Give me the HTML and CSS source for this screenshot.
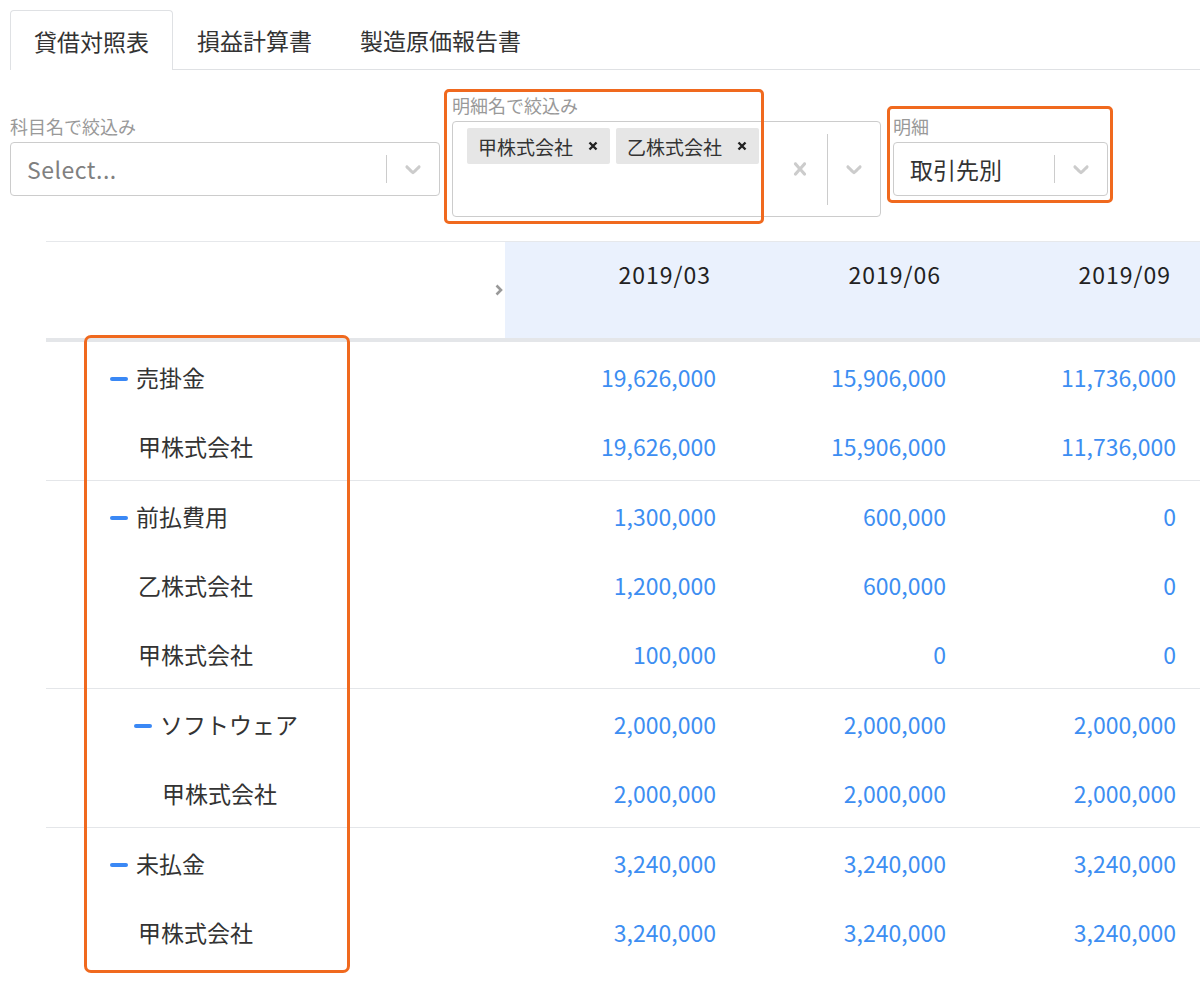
FILE: index.html
```html
<!DOCTYPE html>
<html lang="ja">
<head>
    <meta charset="UTF-8">
    <meta name="viewport" content="width=device-width, initial-scale=1.0">
    <title>貸借対照表</title>
    <link rel="stylesheet" href="styles.css">
</head>
<body>
    <div class="page">
        <nav class="tabs">
            <div class="tab active">貸借対照表</div>
            <div class="tab">損益計算書</div>
            <div class="tab">製造原価報告書</div>
        </nav>

        <div class="filters">
            <div class="filter filter-account">
                <label>科目名で絞込み</label>
                <div class="select">
                    <div class="select-value placeholder">Select...</div>
                    <span class="separator"></span>
                    <div class="indicator">
                        <svg width="26" height="26" viewBox="0 0 20 20"><path d="M4.516 7.548c0.436-0.446 1.043-0.481 1.576 0l3.908 3.747 3.908-3.747c0.533-0.481 1.141-0.446 1.574 0 0.436 0.445 0.408 1.197 0 1.615-0.406 0.418-4.695 4.502-4.695 4.502-0.217 0.223-0.502 0.335-0.787 0.335s-0.57-0.112-0.789-0.335c0 0-4.287-4.084-4.695-4.502s-0.436-1.170 0-1.615z"/></svg>
                    </div>
                </div>
            </div>

            <div class="filter filter-detail">
                <label>明細名で絞込み</label>
                <div class="select multi">
                    <div class="select-value tags">
                        <span class="tag">甲株式会社<span class="tag-remove"><svg width="10" height="10" viewBox="0 0 10 10"><path d="M1.5 1.5L8.5 8.5M8.5 1.5L1.5 8.5"/></svg></span></span>
                        <span class="tag">乙株式会社<span class="tag-remove"><svg width="10" height="10" viewBox="0 0 10 10"><path d="M1.5 1.5L8.5 8.5M8.5 1.5L1.5 8.5"/></svg></span></span>
                    </div>
                    <div class="indicator clear">
                        <svg width="26" height="26" viewBox="0 0 20 20"><path d="M14.348 14.849c-0.469 0.469-1.229 0.469-1.697 0l-2.651-3.030-2.651 3.029c-0.469 0.469-1.229 0.469-1.697 0-0.469-0.469-0.469-1.229 0-1.697l2.758-3.150-2.759-3.152c-0.469-0.469-0.469-1.228 0-1.697s1.228-0.469 1.697 0l2.652 3.031 2.651-3.031c0.469-0.469 1.228-0.469 1.697 0s0.469 1.229 0 1.697l-2.758 3.152 2.758 3.150c0.469 0.469 0.469 1.229 0 1.698z"/></svg>
                    </div>
                    <span class="separator tall"></span>
                    <div class="indicator">
                        <svg width="26" height="26" viewBox="0 0 20 20"><path d="M4.516 7.548c0.436-0.446 1.043-0.481 1.576 0l3.908 3.747 3.908-3.747c0.533-0.481 1.141-0.446 1.574 0 0.436 0.445 0.408 1.197 0 1.615-0.406 0.418-4.695 4.502-4.695 4.502-0.217 0.223-0.502 0.335-0.787 0.335s-0.57-0.112-0.789-0.335c0 0-4.287-4.084-4.695-4.502s-0.436-1.170 0-1.615z"/></svg>
                    </div>
                </div>
                <div class="mark mark-detail"></div>
            </div>

            <div class="filter filter-mode">
                <label>明細</label>
                <div class="select">
                    <div class="select-value">取引先別</div>
                    <span class="separator"></span>
                    <div class="indicator">
                        <svg width="26" height="26" viewBox="0 0 20 20"><path d="M4.516 7.548c0.436-0.446 1.043-0.481 1.576 0l3.908 3.747 3.908-3.747c0.533-0.481 1.141-0.446 1.574 0 0.436 0.445 0.408 1.197 0 1.615-0.406 0.418-4.695 4.502-4.695 4.502-0.217 0.223-0.502 0.335-0.787 0.335s-0.57-0.112-0.789-0.335c0 0-4.287-4.084-4.695-4.502s-0.436-1.170 0-1.615z"/></svg>
                    </div>
                </div>
                <div class="mark mark-mode"></div>
            </div>
        </div>

        <div class="report-wrap">
            <table class="report">
                <colgroup>
                    <col class="col-name">
                    <col class="col-period">
                    <col class="col-period">
                    <col class="col-period">
                    <col>
                </colgroup>
                <thead>
                    <tr>
                        <th class="name-head">
                            <svg class="expand" width="8" height="12" viewBox="0 0 8 12"><path d="M1.5 1.5L6 6L1.5 10.5"/></svg>
                        </th>
                        <th>2019/03</th>
                        <th>2019/06</th>
                        <th>2019/09</th>
                        <th></th>
                    </tr>
                </thead>
                <tbody>
                    <tr class="group-start">
                        <td class="name level-1"><span class="collapse"></span>売掛金</td>
                        <td>19,626,000</td><td>15,906,000</td><td>11,736,000</td><td></td>
                    </tr>
                    <tr>
                        <td class="name level-1 child">甲株式会社</td>
                        <td>19,626,000</td><td>15,906,000</td><td>11,736,000</td><td></td>
                    </tr>
                    <tr class="group-start">
                        <td class="name level-1"><span class="collapse"></span>前払費用</td>
                        <td>1,300,000</td><td>600,000</td><td>0</td><td></td>
                    </tr>
                    <tr>
                        <td class="name level-1 child">乙株式会社</td>
                        <td>1,200,000</td><td>600,000</td><td>0</td><td></td>
                    </tr>
                    <tr>
                        <td class="name level-1 child">甲株式会社</td>
                        <td>100,000</td><td>0</td><td>0</td><td></td>
                    </tr>
                    <tr class="group-start">
                        <td class="name level-2"><span class="collapse"></span>ソフトウェア</td>
                        <td>2,000,000</td><td>2,000,000</td><td>2,000,000</td><td></td>
                    </tr>
                    <tr>
                        <td class="name level-2 child">甲株式会社</td>
                        <td>2,000,000</td><td>2,000,000</td><td>2,000,000</td><td></td>
                    </tr>
                    <tr class="group-start">
                        <td class="name level-1"><span class="collapse"></span>未払金</td>
                        <td>3,240,000</td><td>3,240,000</td><td>3,240,000</td><td></td>
                    </tr>
                    <tr>
                        <td class="name level-1 child">甲株式会社</td>
                        <td>3,240,000</td><td>3,240,000</td><td>3,240,000</td><td></td>
                    </tr>
                </tbody>
            </table>
            <div class="mark mark-names"></div>
        </div>
    </div>
</body>
</html>
```

FILE: styles.css
```css
/* General Styling */
body {
    margin: 0;
    padding: 0;
    background-color: #ffffff;
    color: #333333;
    font-family: "Noto Sans CJK JP", "Noto Sans", sans-serif;
    overflow: hidden;
}

.page {
    width: 1200px;
    padding-top: 10px;
}

/* Tabs */
.tabs {
    display: flex;
    margin-left: 10px;
    border-bottom: 1px solid #dfe1e4;
}

.tab {
    height: 58px;
    padding: 0 23px;
    display: flex;
    align-items: center;
    font-size: 23px;
    color: #333;
    border: 1px solid transparent;
    border-bottom: none;
}

.tab.active {
    border-color: #dfe1e4;
    border-radius: 4px 4px 0 0;
    background: #ffffff;
    margin-bottom: -1px;
    height: 59px;
}

/* Filters */
.filters {
    display: flex;
    align-items: center;
    gap: 12px;
    margin: 25px 0 0 10px;
}

.filter {
    position: relative;
}

.filter label {
    display: block;
    font-size: 18px;
    line-height: 20px;
    color: #999999;
    margin-bottom: 6px;
}

.filter-account { width: 430px; }
.filter-detail { width: 429px; }
.filter-mode { width: 215px; }

.select {
    display: flex;
    align-items: center;
    box-sizing: border-box;
    height: 54px;
    border: 1px solid #cccccc;
    border-radius: 4px;
    background: #fff;
}

.select.multi {
    height: 96px;
}

.select-value {
    flex: 1;
    padding-left: 16px;
    font-size: 23px;
    color: #333;
}

.select-value.placeholder {
    color: #808080;
    font-size: 23px;
    letter-spacing: 0.5px;
}

.separator {
    width: 1px;
    height: 28px;
    background: #cccccc;
}

.separator.tall {
    height: 71px;
}

.indicator {
    width: 52px;
    display: flex;
    justify-content: center;
    align-items: center;
}

.indicator svg {
    fill: #cccccc;
}

.indicator.clear {
    width: 54px;
}

.tags {
    align-self: flex-start;
    display: flex;
    gap: 6px;
    padding: 6px 0 0 14px;
}

.tag {
    display: flex;
    align-items: center;
    height: 36px;
    padding-left: 11px;
    background: #e6e6e6;
    border-radius: 2px;
    font-size: 19px;
    color: #333;
}

.tag-remove {
    display: flex;
    align-items: center;
    padding: 0 12px 0 15px;
}

.tag-remove svg {
    stroke: #222;
    stroke-width: 2.4;
    fill: none;
}

/* Annotation marks */
.mark {
    position: absolute;
    border: 3px solid #f0691e;
    border-radius: 5px;
    pointer-events: none;
}

.mark-detail {
    left: -8px;
    top: -6px;
    width: 314px;
    height: 129px;
}

.mark-mode {
    left: -6px;
    top: -10px;
    width: 220px;
    height: 91px;
}

.mark-names {
    left: 38px;
    top: 94px;
    width: 260px;
    height: 632px;
    border-radius: 7px;
}

/* Report table */
.report-wrap {
    position: relative;
    margin: 24px 0 0 46px;
    padding-bottom: 12px;
    width: 1154px;
    overflow: hidden;
}

.report {
    width: 1154px;
    border-collapse: collapse;
    table-layout: fixed;
}

.col-name { width: 459px; }
.col-period { width: 230px; }

.report thead th {
    height: 79px;
    padding: 17px 24px 0 0;
    vertical-align: top;
    text-align: right;
    font-size: 23px;
    line-height: 30px;
    font-weight: 400;
    letter-spacing: 1px;
    color: #222;
    background: #eaf1fd;
    border-top: 1px solid #e6e8eb;
    border-bottom: 4px solid #e4e6e9;
}

.report thead th.name-head {
    background: #ffffff;
    padding: 0 2px 0 0;
    vertical-align: middle;
}

.expand {
    display: block;
    margin-left: auto;
    fill: none;
    stroke: #999999;
    stroke-width: 2.6;
}

.report td {
    height: 69px;
    padding: 0 19px 0 0;
    text-align: right;
    font-size: 23px;
    color: #3d8ef2;
}

.report tr.group-start td {
    border-top: 1px solid #e4e6e9;
}

.report tbody tr:first-child td {
    border-top: none;
}

.report td.name {
    text-align: left;
    color: #333;
}

.name.level-1 { padding-left: 64px; }
.name.level-1.child { padding-left: 92px; }
.name.level-2 { padding-left: 88px; }
.name.level-2.child { padding-left: 116px; }

.collapse {
    display: inline-block;
    width: 18px;
    height: 4px;
    border-radius: 2px;
    background: #3a88f5;
    margin-right: 8px;
    vertical-align: middle;
    position: relative;
    top: -1px;
}
```
